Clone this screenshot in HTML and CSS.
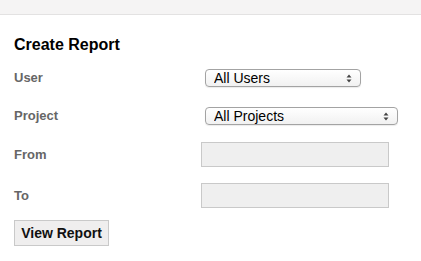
FILE: index.html
```html
<!DOCTYPE html>
<html>
<head>
<meta charset="utf-8">
<link rel="stylesheet" href="styles.css">
</head>
<body>
<div class="topbar"></div>
<main class="content">
  <h1 class="title">Create Report</h1>
  <form class="report-form">
    <div class="row row-user">
      <label class="label">User</label>
      <span class="select-wrap select-users">
        <select class="select"><option>All Users</option></select>
        <svg class="arrows" width="6" height="9" viewBox="0 0 6 9"><path d="M3 0.5 L5.5 3.5 L0.5 3.5 Z M3 8.5 L5.5 5.5 L0.5 5.5 Z" fill="#444"/></svg>
      </span>
    </div>
    <div class="row row-project">
      <label class="label">Project</label>
      <span class="select-wrap select-projects">
        <select class="select"><option>All Projects</option></select>
        <svg class="arrows" width="6" height="9" viewBox="0 0 6 9"><path d="M3 0.5 L5.5 3.5 L0.5 3.5 Z M3 8.5 L5.5 5.5 L0.5 5.5 Z" fill="#444"/></svg>
      </span>
    </div>
    <div class="row row-from">
      <label class="label">From</label>
      <input class="text-input" type="text">
    </div>
    <div class="row row-to">
      <label class="label">To</label>
      <input class="text-input" type="text">
    </div>
    <button class="btn" type="button">View Report</button>
  </form>
</main>
</body>
</html>
```

FILE: styles.css
```css
html, body {
  margin: 0;
  padding: 0;
  background: #ffffff;
  font-family: "Liberation Sans", Arial, sans-serif;
}

.topbar {
  height: 14px;
  background: #f5f4f4;
  border-bottom: 1px solid #e3e2e2;
}

.content {
  padding: 0 14px;
}

.title {
  margin: 20px 0 0 0;
  font-size: 16px;
  line-height: 19px;
  font-weight: bold;
  color: #000;
}

.report-form {
  display: flex;
  flex-direction: column;
  align-items: flex-start;
  margin: 0;
}

.row {
  display: flex;
  align-items: center;
}

.row-user {
  margin-top: 15px;
  height: 18px;
}

.row-project {
  margin-top: 20px;
  height: 18px;
}

.row-from {
  margin-top: 17px;
  height: 25px;
}

.row-to {
  margin-top: 16px;
  height: 25px;
}

.label {
  width: 187px;
  font-size: 13px;
  font-weight: bold;
  color: #666666;
  line-height: 16px;
}

.select-wrap {
  position: relative;
  display: block;
  margin-left: 4px;
  height: 18px;
}

.select-users { width: 156px; }
.select-projects { width: 193px; }

.select {
  appearance: none;
  -webkit-appearance: none;
  box-sizing: border-box;
  width: 100%;
  height: 18px;
  margin: 0;
  padding: 0 0 0 8px;
  border: 1px solid #a3a3a3;
  border-radius: 4px;
  background: linear-gradient(#ffffff, #f1f1f1);
  box-shadow: 0 1px 1px rgba(0,0,0,0.08);
  font-family: "Liberation Sans", Arial, sans-serif;
  font-size: 14px;
  line-height: 16px;
  color: #000;
}

.arrows {
  position: absolute;
  right: 9px;
  top: 5px;
  pointer-events: none;
}

.text-input {
  box-sizing: border-box;
  width: 188px;
  height: 25px;
  margin: 0;
  padding: 0 4px;
  border: 1px solid #c9c9c9;
  background: #efefef;
  font-family: "Liberation Sans", Arial, sans-serif;
  font-size: 13px;
}

.btn {
  margin-top: 12px;
  box-sizing: border-box;
  width: 95px;
  height: 26px;
  padding: 0;
  border: 1px solid #c9c9c9;
  border-radius: 0;
  background: #efeeee;
  font-family: "Liberation Sans", Arial, sans-serif;
  font-size: 14px;
  font-weight: bold;
  color: #111;
}
```
